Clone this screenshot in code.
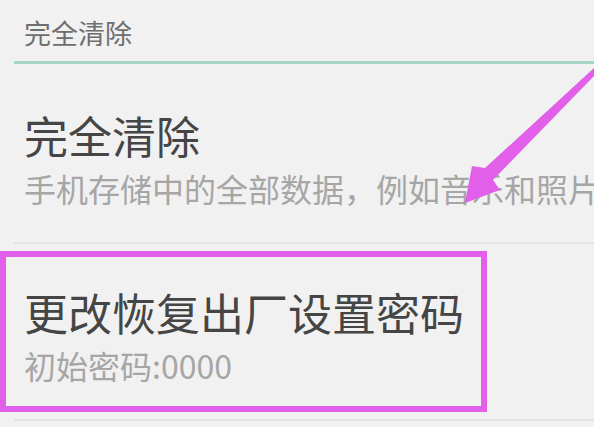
export default function App() {
  return (
    <div
      className="relative w-[594px] h-[427px] overflow-hidden bg-[#f1f1f1]"
      style={{ fontFamily: '"Noto Sans CJK SC", "Noto Sans", sans-serif' }}
    >
      <div className="h-[61px] pl-[24px] pt-[19px] text-[27px] leading-[27px] text-[#6e6e6e] whitespace-nowrap">
        完全清除
      </div>
      <div className="ml-[14px] h-[3px] bg-[#a6d5c5]" />

      <div className="pl-[24px] whitespace-nowrap">
        <div className="mt-[49px] text-[44px] leading-[44px] text-[#454545]">完全清除</div>
        <div className="mt-[15px] text-[32px] leading-[32px] text-[#a6a6a6]">
          手机存储中的全部数据，例如音乐和照片
        </div>
      </div>
      <div className="mt-[38px] ml-[14px] h-[2px] bg-[#e4e4e4]" />

      <div className="pl-[24px] whitespace-nowrap">
        <div className="mt-[46px] text-[44px] leading-[44px] text-[#454545]">更改恢复出厂设置密码</div>
        <div className="mt-[15px] text-[32px] leading-[32px] text-[#a6a6a6]">初始密码:0000</div>
      </div>
      <div className="mt-[38px] ml-[14px] h-[2px] bg-[#e4e4e4]" />

      <div className="absolute left-0 top-[251px] w-[487px] h-[161px] border-[6px] border-[#e25fe9]" />

      <svg className="absolute left-0 top-0" width="594" height="427" viewBox="0 0 594 427">
        <polygon
          points="594,68 485,168 472,166 465,203 500,190 493,180 594,76"
          fill="#e25fe9"
        />
      </svg>
    </div>
  );
}
